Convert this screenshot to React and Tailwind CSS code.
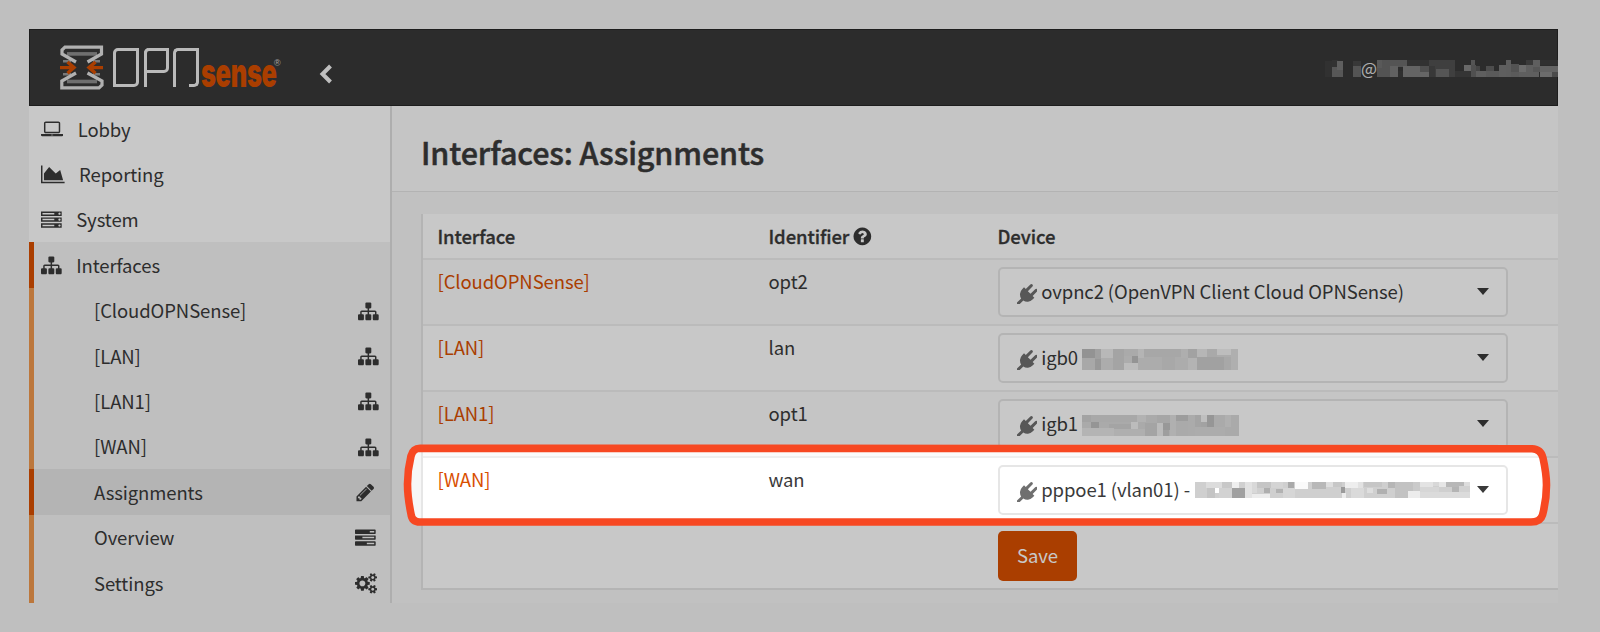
const SITEMAP =
  'M1792 1248v320q0 40-28 68t-68 28h-320q-40 0-68-28t-28-68v-320q0-40 28-68t68-28h96v-192h-512v192h96q40 0 68 28t28 68v320q0 40-28 68t-68 28h-320q-40 0-68-28t-28-68v-320q0-40 28-68t68-28h96v-192h-512v192h96q40 0 68 28t28 68v320q0 40-28 68t-68 28h-320q-40 0-68-28t-28-68v-320q0-40 28-68t68-28h96v-192q0-52 38-90t90-38h512v-192h-96q-40 0-68-28t-28-68v-320q0-40 28-68t68-28h320q40 0 68 28t28 68v320q0 40-28 68t-68 28h-96v192h512q52 0 90 38t38 90v192h96q40 0 68 28t28 68z';
const PENCIL =
  'M491 1536l91-91-235-235-91 91v107h128v128h107zm523-928q0-22-22-22-10 0-17 7l-542 542q-7 7-7 17 0 22 22 22 10 0 17-7l542-542q7-7 7-17zm-54-192l416 416-832 832h-416v-416zm683 96q0 53-37 90l-166 166-416-416 166-165q36-38 90-38 53 0 91 38l235 234q37 39 37 91z';
const SERVER =
  'M128 1408h1024v-128h-1024v128zm0-512h1024v-128h-1024v128zm1568 448q0-40-28-68t-68-28-68 28-28 68 28 68 68 28 68-28 28-68zm-1568-960h1024v-128h-1024v128zm1568 448q0-40-28-68t-68-28-68 28-28 68 28 68 68 28 68-28 28-68zm0-512q0-40-28-68t-68-28-68 28-28 68 28 68 68 28 68-28 28-68zm96 832v384h-1792v-384h1792zm0-512v384h-1792v-384h1792zm0-512v384h-1792v-384h1792z';
const TASKS =
  'M1024 1408h640v-128h-640v128zm-384-512h1024v-128h-1024v128zm640-512h384v-128h-384v128zm512 832v256q0 26-19 45t-45 19h-1664q-26 0-45-19t-19-45v-256q0-26 19-45t45-19h1664q26 0 45 19t19 45zm0-512v256q0 26-19 45t-45 19h-1664q-26 0-45-19t-19-45v-256q0-26 19-45t45-19h1664q26 0 45 19t19 45zm0-512v256q0 26-19 45t-45 19h-1664q-26 0-45-19t-19-45v-256q0-26 19-45t45-19h1664q26 0 45 19t19 45z';
const LAPTOP =
  'M416 1152q-66 0-113-47t-47-113v-704q0-66 47-113t113-47h1088q66 0 113 47t47 113v704q0 66-47 113t-113 47h-1088zm-32-864v704q0 13 9.5 22.5t22.5 9.5h1088q13 0 22.5-9.5t9.5-22.5v-704q0-13-9.5-22.5t-22.5-9.5h-1088q-13 0-22.5 9.5t-9.5 22.5zm1376 928h160v96q0 40-47 68t-113 28h-1600q-66 0-113-28t-47-68v-96h1760zm-720 96q16 0 16-16t-16-16h-160q-16 0-16 16t16 16h160z';
const AREA = 'M2048 1536v128h-2048v-1536h128v1408h1920zm-384-1024l256 896h-1664v-576l448-576 576 576z';
const HELP =
  'M1024 1376v-192q0-14-9-23t-23-9h-192q-14 0-23 9t-9 23v192q0 14 9 23t23 9h192q14 0 23-9t9-23zm256-672q0-88-55.5-163t-138.5-116-170-41q-243 0-371 213-15 24 8 42l132 100q7 6 19 6 16 0 25-12 53-68 86-92 34-24 86-24 48 0 85.5 26t37.5 59q0 38-20 61t-68 45q-63 28-115.5 86.5t-52.5 125.5v36q0 14 9 23t23 9h192q14 0 23-9t9-23q0-19 21.5-49.5t54.5-49.5q32-18 49-28.5t46-35 44.5-48 28-60.5 12.5-81zm384 192q0 209-103 385.5t-279.5 279.5-385.5 103-385.5-103-279.5-279.5-103-385.5 103-385.5 279.5-279.5 385.5-103 385.5 103 279.5 279.5 103 385.5z';
const PLUG =
  'M1755 453q37 38 37 90.5t-37 90.5l-401 400 150 150-160 160q-163 163-389.5 186.5t-411.5-100.5l-362 362h-181v-181l362-362q-124-185-100.5-411.5t186.5-389.5l160-160 150 150 400-401q38-37 91-37t90 37 37 90.5-37 90.5l-400 401 234 234 401-400q38-37 91-37t90 37z';
const COGS =
  'M896 896q0-106-75-181t-181-75-181 75-75 181 75 181 181 75 181-75 75-181zm768 512q0-52-38-90t-90-38-90 38-38 90q0 53 37.5 90.5t90.5 37.5 90.5-37.5 37.5-90.5zm0-1024q0-52-38-90t-90-38-90 38-38 90q0 53 37.5 90.5t90.5 37.5 90.5-37.5 37.5-90.5zm-384 421v185q0 10-7 19.5t-16 10.5l-155 24q-11 35-32 76 34 48 90 115 7 11 7 20 0 12-7 19-23 30-82.5 89.5t-78.5 59.5q-11 0-21-7l-115-90q-37 19-77 31-11 108-23 155-7 24-30 24h-186q-11 0-20-7.5t-10-17.5l-23-153q-34-10-75-31l-118 89q-7 7-20 7-11 0-21-8-144-133-144-160 0-9 7-19 10-14 41-53t47-61q-23-44-35-82l-152-24q-10-1-17-9.5t-7-19.5v-185q0-10 7-19.5t16-10.5l155-24q11-35 32-76-34-48-90-115-7-11-7-20 0-12 7-20 22-30 82-89t79-59q11 0 21 7l115 90q34-18 77-32 11-108 23-154 7-24 30-24h186q11 0 20 7.5t10 17.5l23 153q34 10 75 31l118-89q8-7 20-7 11 0 21 8 144 133 144 160 0 8-7 19-12 16-42 54t-45 60q23 48 34 82l152 23q10 2 17 10.5t7 19.5zm640 533v140q0 16-149 31-12 27-30 52 51 113 51 138 0 4-4 7-122 71-124 71-8 0-46-47t-52-68q-20 2-30 2t-30-2q-14 21-52 68t-46 47q-2 0-124-71-4-3-4-7 0-25 51-138-18-25-30-52-149-15-149-31v-140q0-16 149-31 13-29 30-52-51-113-51-138 0-4 4-7 4-2 35-20t59-34 30-16q8 0 46 46.5t52 67.5q20-2 30-2t30 2q51-71 92-112l6-2q4 0 124 70 4 3 4 7 0 25-51 138 17 23 30 52 149 15 149 31zm0-1024v140q0 16-149 31-12 27-30 52 51 113 51 138 0 4-4 7-122 71-124 71-8 0-46-47t-52-68q-20 2-30 2t-30-2q-14 21-52 68t-46 47q-2 0-124-71-4-3-4-7 0-25 51-138-18-25-30-52-149-15-149-31v-140q0-16 149-31 13-29 30-52-51-113-51-138 0-4 4-7 4-2 35-20t59-34 30-16q8 0 46 46.5t52 67.5q20-2 30-2t30 2q51-71 92-112l6-2q4 0 124 70 4 3 4 7 0 25-51 138 17 23 30 52 149 15 149 31z';

function Icon({ d, w = 1792, className }) {
  return (
    <svg viewBox={`0 0 ${w} 1792`} className={className} fill="currentColor" aria-hidden="true">
      <path d={d} />
    </svg>
  );
}

/* Pixelated redaction strip: cells are [x, y, width, height, colour]. */
function Mosaic({ w, h, base, cells, className }) {
  return (
    <svg width={w} height={h} viewBox={`0 0 ${w} ${h}`} className={`shrink-0 ${className}`} shapeRendering="crispEdges" aria-hidden="true">
      <rect width={w} height={h} fill={base} />
      {cells.map(([x, y, cw, ch, c], i) => (
        <rect key={i} x={x} y={y} width={cw} height={ch} fill={c} />
      ))}
    </svg>
  );
}

const IGB0 = [
  [0, 0, 13, 9, '#bcbcbc'], [13, 0, 6, 11, '#cdcdcd'], [19, 0, 12, 9, '#ebebeb'], [0, 9, 13, 12, '#d6d6d6'],
  [13, 10, 6, 11, '#c2c2c2'], [31, 0, 11, 21, '#d2d2d2'], [42, 0, 14, 7, '#d9d9d9'], [42, 14, 14, 7, '#f0f0f0'],
  [50, 7, 6, 7, '#bdbdbd'], [56, 0, 6, 9, '#e6e6e6'], [62, 0, 37, 8, '#d5d5d5'], [80, 8, 13, 13, '#d6d6d6'],
  [99, 0, 7, 9, '#dedede'], [106, 0, 9, 9, '#cfcfcf'], [106, 9, 9, 12, '#e4e4e4'], [115, 0, 10, 8, '#e8e8e8'],
  [125, 0, 10, 8, '#d8d8d8'], [115, 8, 27, 13, '#cecece'], [135, 0, 14, 6, '#f1f1f1'], [142, 8, 7, 13, '#d6d6d6'],
  [149, 0, 7, 21, '#e0e0e0'],
];
const IGB1 = [
  [0, 0, 9, 7, '#d0d0d0'], [9, 0, 46, 7, '#d6d6d6'], [9, 7, 8, 6, '#bebebe'], [27, 9, 22, 5, '#d2d2d2'],
  [49, 7, 7, 7, '#f0f0f0'], [0, 13, 32, 8, '#e6e6e6'], [32, 14, 31, 7, '#dfdfdf'], [63, 8, 12, 13, '#d2d2d2'],
  [55, 0, 9, 7, '#e3e3e3'], [75, 0, 13, 8, '#d4d4d4'], [75, 8, 6, 13, '#efefef'], [81, 8, 7, 7, '#c2c2c2'],
  [81, 15, 6, 6, '#cacaca'], [88, 0, 6, 21, '#e1e1e1'], [94, 0, 12, 6, '#c8c8c8'], [106, 0, 7, 21, '#dadada'],
  [113, 0, 6, 12, '#d2d2d2'], [119, 0, 6, 7, '#f4f4f4'], [119, 7, 6, 5, '#cfcfcf'], [125, 0, 7, 12, '#c0c0c0'],
  [113, 12, 30, 9, '#dcdcdc'], [143, 0, 6, 12, '#e1e1e1'], [149, 0, 8, 21, '#d9d9d9'],
];
const PPPOE = [
  [0, 0, 11, 6, '#cfcfcf'], [11, 0, 16, 6, '#dcdcdc'], [27, 0, 10, 6, '#c8c8c8'], [37, 0, 7, 6, '#efefef'],
  [44, 0, 6, 6, '#d0d0d0'], [12, 6, 8, 10, '#c4c4c4'], [20, 6, 4, 5, '#ffffff'], [24, 6, 13, 10, '#d2d2d2'],
  [37, 6, 13, 10, '#a0a0a0'], [50, 0, 7, 16, '#e2e2e2'], [57, 0, 5, 11, '#d8d8d8'], [57, 12, 18, 4, '#ececec'],
  [62, 0, 14, 6, '#c5c5c5'], [69, 6, 6, 5, '#aeaeae'], [81, 7, 7, 4, '#b2b2b2'], [76, 0, 12, 6, '#d4d4d4'],
  [93, 0, 6, 6, '#a9a9a9'], [88, 6, 12, 10, '#d6d6d6'], [100, 0, 13, 7, '#fafafa'], [117, 0, 14, 7, '#b8b8b8'],
  [131, 0, 7, 5, '#dedede'], [138, 0, 9, 5, '#c7c7c7'], [146, 5, 4, 6, '#9a9a9a'], [147, 11, 4, 5, '#ebebeb'],
  [150, 0, 13, 6, '#eeeeee'], [163, 0, 5, 6, '#e2e2e2'], [156, 6, 13, 10, '#dadada'], [172, 6, 6, 5, '#dedede'],
  [182, 7, 10, 5, '#b0b0b0'], [169, 0, 18, 5, '#c6c6c6'], [193, 0, 7, 6, '#b6b6b6'], [200, 0, 18, 16, '#c2c2c2'],
  [213, 9, 12, 7, '#ececec'], [218, 0, 7, 9, '#cacaca'], [225, 0, 13, 5, '#e3e3e3'], [225, 5, 19, 5, '#d6d6d6'],
  [225, 10, 50, 6, '#dbdbdb'], [238, 0, 6, 4, '#d8d8d8'], [244, 0, 7, 5, '#e6e6e6'], [251, 0, 18, 5, '#b8b8b8'],
  [257, 5, 7, 5, '#b4b4b4'], [269, 0, 6, 4, '#dddddd'], [264, 4, 11, 6, '#d2d2d2'],
];
const USER = [
  [0, 1, 7, 16, '#3f3f3f'], [7, 0, 6, 7, '#404040'], [7, 7, 11, 10, '#6f6f6f'], [12, 1, 6, 9, '#7a7a7a'],
  [28, 1, 8, 6, '#484848'], [28, 6, 8, 11, '#6c6c6c'],
];
const HOST = [
  [0, 0, 13, 17, '#6a6a6a'], [0, 0, 5, 8, '#727272'], [13, 0, 17, 7, '#6b6b6b'], [13, 6, 8, 11, '#7c7c7c'],
  [21, 11, 5, 6, '#3c3c3c'], [26, 6, 17, 11, '#808080'], [43, 6, 9, 6, '#676767'], [30, 0, 22, 6, '#404040'],
  [43, 12, 9, 5, '#828282'], [52, 0, 26, 17, '#515151'], [52, 6, 6, 11, '#484848'], [59, 9, 13, 8, '#6d6d6d'],
  [78, 11, 16, 6, '#444444'], [87, 5, 7, 6, '#858585'], [94, 0, 4, 6, '#6d6d6d'], [94, 5, 5, 12, '#666666'],
  [99, 11, 10, 6, '#7a7a7a'], [99, 6, 4, 5, '#5a5a5a'], [109, 6, 8, 5, '#636363'], [109, 11, 13, 6, '#737373'],
  [122, 5, 7, 12, '#7a7a7a'], [129, 0, 5, 17, '#787878'], [134, 4, 8, 8, '#6a6a6a'], [134, 12, 8, 5, '#757575'],
  [142, 5, 7, 7, '#8a8a8a'], [142, 12, 20, 5, '#7a7a7a'], [149, 0, 7, 12, '#4a4a4a'], [149, 5, 7, 7, '#7a7a7a'],
  [156, 0, 7, 7, '#7a7a7a'], [156, 7, 7, 5, '#6e6e6e'], [163, 0, 18, 5, '#3e3e3e'], [163, 6, 18, 6, '#808080'],
  [163, 12, 12, 5, '#8a8a8a'], [175, 12, 6, 5, '#606060'],
];

function Logo() {
  return (
    <div className="flex items-start pl-[30px] pt-[15px]">
      <svg width="44" height="45" viewBox="0 0 44 45" fill="none" aria-hidden="true">
        <path d="M7 8.9H37" stroke="#8e8e8e" strokeWidth="3.6" />
        <path d="M7 36.5H37" stroke="#8e8e8e" strokeWidth="3.6" />
        <path d="M3 16.3h8M3 29.2h8M33 16.3h7M33 29.2h7" stroke="#9a9a9a" strokeWidth="2.4" />
        <path d="M16 17L2 9V5L5 2.2H41.500V9L27.500 17" stroke="#e2e2e2" strokeWidth="3.2" />
        <path d="M16 28L1.800 36V42.800H39L42 40V36L27.500 28" stroke="#e2e2e2" strokeWidth="3.2" />
        <path d="M0 22.600H13M7.500 17L14 22.600L7.500 28.200" stroke="#d94f00" strokeWidth="3.4" />
        <path d="M43 22.600H30M35.500 17L29 22.600L35.500 28.200" stroke="#d94f00" strokeWidth="3.4" />
      </svg>
      <div className="ml-[9px] mt-[3px] flex items-start" role="img" aria-label="OPN">
        <span className="h-[39px] w-[26px] rounded-tl-[5px] rounded-br-[5px] border-[3px] border-[#eeeeee]" />
        <span className="ml-[5px] flex h-[39px] w-[25px] rounded-tl-[5px] border-l-[3px] border-[#eeeeee]">
          <span className="-ml-[3px] h-[25px] w-[25px] shrink-0 rounded-tl-[5px] rounded-br-[5px] border-[3px] border-[#eeeeee]" />
        </span>
        <span className="ml-[4px] flex h-[39px] w-[26px] items-end justify-end rounded-tl-[5px] border-l-[3px] border-t-[3px] border-[#eeeeee]">
          <span className="-mt-[3px] h-[39px] w-[10px] shrink-0 rounded-br-[5px] border-b-[3px] border-r-[3px] border-[#eeeeee]" />
        </span>
      </div>
      <span className="ml-[2px] mt-[8px] flex h-[40px] w-[76px] items-center">
        <span className="origin-left scale-x-[0.635] font-[Inter,sans-serif] text-[40px] font-black leading-[40px] tracking-[-0.5px] text-[#d94f00]">
          sense
        </span>
      </span>
      <span className="-ml-[3px] mt-[12px] font-['Liberation_Sans',sans-serif] text-[9px] leading-[12px] text-[#cfcfcf]">®</span>
    </div>
  );
}

const ROWS = [
  { name: '[CloudOPNSense]', id: 'opt2', dev: 'ovpnc2 (OpenVPN Client Cloud OPNSense)' },
  { name: '[LAN]', id: 'lan', dev: 'igb0', mosaic: <Mosaic w={156} h={21} base="#dcdcdc" cells={IGB0} className="ml-[4px] mt-[2px]" /> },
  { name: '[LAN1]', id: 'opt1', dev: 'igb1', mosaic: <Mosaic w={157} h={21} base="#d9d9d9" cells={IGB1} className="ml-[4px] mt-[2px]" /> },
  { name: '[WAN]', id: 'wan', dev: 'pppoe1 (vlan01) -', mosaic: <Mosaic w={275} h={16} base="#cfcfcf" cells={PPPOE} className="ml-[5px]" /> },
];

const SUB = [
  { t: '[CloudOPNSense]', d: SITEMAP, r: 'mr-[11px]' },
  { t: '[LAN]', d: SITEMAP, r: 'mr-[11px]' },
  { t: '[LAN1]', d: SITEMAP, r: 'mr-[11px]' },
  { t: '[WAN]', d: SITEMAP, r: 'mr-[11px]' },
  { t: 'Assignments', d: PENCIL, r: 'mr-[14px]', active: true },
  { t: 'Overview', d: TASKS, r: 'mr-[14px]' },
  { t: 'Settings', d: COGS, w: 1920, r: 'mr-[13px]' },
];

function TopItem({ d, w, iw, gap, children }) {
  return (
    <li className="flex h-[45.4px] items-center pl-[12px]">
      <Icon d={d} w={w} className={`h-[20.7px] ${iw}`} />
      <span className={gap}>{children}</span>
    </li>
  );
}

export default function App() {
  return (
    <div className="relative h-[632px] w-[1600px] overflow-hidden bg-[#f4f4f4] pl-[29px] pt-[29px] font-['Noto_Sans_CJK_SC',sans-serif] text-[18.5px] leading-[28px] tracking-[-0.1px] text-[#3a3a3a]">
      <div className="flex h-[573.5px] w-[1529px] flex-col overflow-hidden">
        <header className="flex h-[77px] shrink-0 items-start border border-[#262626] bg-[#393939]">
          <Logo />
          <svg width="14" height="20" viewBox="0 0 14 20" className="ml-[38px] mt-[34px]" fill="none" aria-hidden="true">
            <path d="M11.500 2L3.500 10L11.500 18" stroke="#f4f4f4" strokeWidth="4" />
          </svg>
          <div className="ml-auto flex items-center pt-[24px] text-[#e0e0e0]">
            <Mosaic w={36} h={17} base="#393939" cells={USER} className="" />
            <span className="text-[17px]">@</span>
            <Mosaic w={181} h={17} base="#393939" cells={HOST} className="-mr-[1px]" />
          </div>
        </header>
        <div className="flex min-h-0 flex-1">
          <nav className="w-[363px] shrink-0 border-r-2 border-[#dedede] bg-white">
            <ul>
              <TopItem d={LAPTOP} w={1920} iw="w-[22.2px] mt-[3px]" gap="ml-[14.5px]">Lobby</TopItem>
              <TopItem d={AREA} w={2048} iw="w-[23.6px] mt-[1px]" gap="ml-[14.5px]">Reporting</TopItem>
              <TopItem d={SERVER} w={1792} iw="w-[20.7px] mt-[1px]" gap="ml-[14.5px]">System</TopItem>
            </ul>
            <ul className="bg-[#f4f4f4]">
              <li className="flex h-[45.4px] items-center border-l-[5px] border-[#d94f00] pl-[7px]">
                <Icon d={SITEMAP} className="mt-[1px] h-[20.7px] w-[20.7px]" />
                <span className="ml-[14.5px]">Interfaces</span>
              </li>
              {SUB.map((s) => (
                <li
                  key={s.t}
                  className={`flex h-[45.4px] items-center justify-between border-l-[5px] pl-[60px] ${
                    s.active ? 'border-[#d94f00] bg-[#e6e6e6]' : 'border-[#f0984d]'
                  }`}
                >
                  <span>{s.t}</span>
                  <Icon d={s.d} w={s.w} className={`mt-[1.5px] h-[20.7px] w-auto ${s.r}`} />
                </li>
              ))}
            </ul>
          </nav>
          <main className="min-w-0 flex-1 bg-[#f7f7f7]">
            <h1 className="flex h-[86px] items-center border-b border-[#e4e4e4] bg-[#fbfbfb] pl-[29px] pt-[6px] text-[30.5px] font-medium tracking-[-0.12px] [-webkit-text-stroke:0.5px_#3a3a3a]">
              Interfaces: Assignments
            </h1>
            <div className="pl-[29px] pt-[22px]">
              <div className="border-b-2 border-l-2 border-[#e6e6e6] bg-white">
                <div className="grid h-[44px] grid-cols-[331px_229px_1fr] items-center pl-[14.5px] font-medium [-webkit-text-stroke:0.3px_#3a3a3a]">
                  <span>Interface</span>
                  <span className="flex items-center">
                    Identifier
                    <Icon d={HELP} className="ml-[3px] h-[20.7px] w-[20.7px]" />
                  </span>
                  <span>Device</span>
                </div>
                {ROWS.map((r, i) => (
                  <div
                    key={r.id}
                    className={`grid h-[66px] grid-cols-[331px_229px_1fr] items-start border-t-2 border-[#efefef] pl-[14.5px] pt-[7px] ${
                      i % 2 ? 'bg-white' : 'bg-[#fbfbfb]'
                    }`}
                  >
                    <a className="text-[#d94f00]">{r.name}</a>
                    <span>{r.id}</span>
                    <div className="flex h-[50px] w-[510px] items-center rounded-[5px] border-2 border-[#e6e6e6] bg-white pl-[17px] pr-[17px]">
                      <Icon d={PLUG} className="mt-[4px] h-[20.7px] w-[20.7px] shrink-0 text-[#6f6f6f]" />
                      <span className="-mt-[3px] ml-[4px] whitespace-nowrap">{r.dev}</span>
                      {r.mosaic}
                      <span className="-mt-[1px] ml-auto h-0 w-0 border-x-[6px] border-t-[7px] border-x-transparent border-t-[#3a3a3a]" />
                    </div>
                  </div>
                ))}
                <div className="h-[66px] border-t-2 border-[#efefef] pl-[575px] pt-[7px]">
                  <button className="h-[50px] w-[79px] rounded-[5px] bg-[#d94f00] pb-[3px] text-white">Save</button>
                </div>
              </div>
            </div>
          </main>
        </div>
      </div>
      <svg width="1600" height="632" viewBox="0 0 1600 632" className="absolute inset-0" fill="none" aria-hidden="true">
        <path
          fillRule="evenodd"
          fill="#000000"
          fillOpacity="0.216"
          d="M0 0H1600V632H0ZM420 448.300L1532 448.700Q1541 449 1543 458Q1546.500 474 1546.500 485Q1546.500 500 1542.500 515Q1540.500 522 1531 522L420 522Q412 522 411 514Q407.500 497 407.500 484Q407.500 470 411 456Q413 448.300 420 448.300Z"
        />
        <path
          stroke="#f74822"
          strokeWidth="7.6"
          d="M420 448.300L1532 448.700Q1541 449 1543 458Q1546.500 474 1546.500 485Q1546.500 500 1542.500 515Q1540.500 522 1531 522L420 522Q412 522 411 514Q407.500 497 407.500 484Q407.500 470 411 456Q413 448.300 420 448.300Z"
        />
      </svg>
    </div>
  );
}
